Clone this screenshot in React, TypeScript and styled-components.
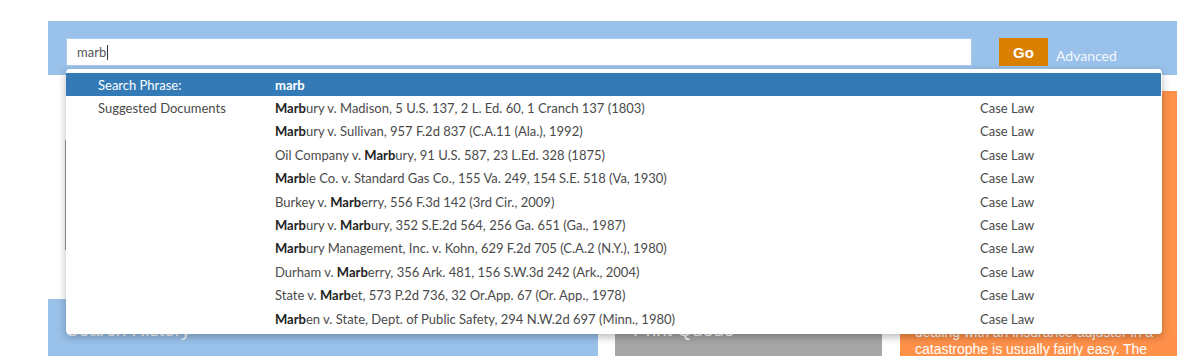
import React from 'react'
import styled, { createGlobalStyle } from 'styled-components'

type Suggestion = {
  parts: { text: string; bold?: boolean }[]
  kind: string
}

const suggestions: Suggestion[] = [
  { parts: [{ text: 'Marb', bold: true }, { text: 'ury v. Madison, 5 U.S. 137, 2 L. Ed. 60, 1 Cranch 137 (1803)' }], kind: 'Case Law' },
  { parts: [{ text: 'Marb', bold: true }, { text: 'ury v. Sullivan, 957 F.2d 837 (C.A.11 (Ala.), 1992)' }], kind: 'Case Law' },
  { parts: [{ text: 'Oil Company v. ' }, { text: 'Marb', bold: true }, { text: 'ury, 91 U.S. 587, 23 L.Ed. 328 (1875)' }], kind: 'Case Law' },
  { parts: [{ text: 'Marb', bold: true }, { text: 'le Co. v. Standard Gas Co., 155 Va. 249, 154 S.E. 518 (Va, 1930)' }], kind: 'Case Law' },
  { parts: [{ text: 'Burkey v. ' }, { text: 'Marb', bold: true }, { text: 'erry, 556 F.3d 142 (3rd Cir., 2009)' }], kind: 'Case Law' },
  { parts: [{ text: 'Marb', bold: true }, { text: 'ury v. ' }, { text: 'Marb', bold: true }, { text: 'ury, 352 S.E.2d 564, 256 Ga. 651 (Ga., 1987)' }], kind: 'Case Law' },
  { parts: [{ text: 'Marb', bold: true }, { text: 'ury Management, Inc. v. Kohn, 629 F.2d 705 (C.A.2 (N.Y.), 1980)' }], kind: 'Case Law' },
  { parts: [{ text: 'Durham v. ' }, { text: 'Marb', bold: true }, { text: 'erry, 356 Ark. 481, 156 S.W.3d 242 (Ark., 2004)' }], kind: 'Case Law' },
  { parts: [{ text: 'State v. ' }, { text: 'Marb', bold: true }, { text: 'et, 573 P.2d 736, 32 Or.App. 67 (Or. App., 1978)' }], kind: 'Case Law' },
  { parts: [{ text: 'Marb', bold: true }, { text: 'en v. State, Dept. of Public Safety, 294 N.W.2d 697 (Minn., 1980)' }], kind: 'Case Law' },
]

const GlobalStyle = createGlobalStyle`
  body {
    margin: 0;
    background: #fff;
    font-family: Lato, 'Open Sans', sans-serif;
    overflow: hidden;
  }
`

const Page = styled.div`
  width: 1129px;
  margin-left: 48px;
  padding-top: 21px;
  height: 335px;
  overflow: hidden;
`

const Header = styled.div`
  position: relative;
  height: 54px;
  box-sizing: border-box;
  padding: 17px 0 0 18px;
  background: #99c1ea;
  display: flex;
  align-items: flex-start;
`

const SearchInput = styled.div`
  width: 906px;
  height: 28px;
  box-sizing: border-box;
  background: #fff;
  border: 1px solid #a9cdf0;
  padding-left: 10px;
  display: flex;
  align-items: center;
  font-size: 13px;
  color: #555;
`

const Caret = styled.span`
  display: inline-block;
  width: 1px;
  height: 15px;
  background: #333;
  margin-left: 1px;
`

const GoButton = styled.button`
  margin-left: 27px;
  width: 49px;
  height: 28px;
  border: none;
  background: #d98000;
  color: #fff;
  font-family: 'Liberation Sans', Arial, sans-serif;
  font-weight: bold;
  font-size: 15px;
  padding: 0;
`

const AdvancedLink = styled.span`
  margin: 9px 0 0 8px;
  font-size: 14px;
  color: #f4f8fd;
`

const Dropdown = styled.div`
  position: absolute;
  left: 18px;
  top: 48px;
  width: 1096px;
  box-sizing: border-box;
  padding: 4px 1px 4px 0;
  background: #fff;
  border-radius: 4px;
  box-shadow: 0 3px 9px rgba(0, 0, 0, 0.28);
  z-index: 10;
`

const Row = styled.div<{ $active?: boolean }>`
  display: grid;
  grid-template-columns: 32px 177px 705px 1fr;
  align-items: center;
  height: 23.4px;
  font-size: 13px;
  color: ${(p) => (p.$active ? '#fff' : '#4a4a4a')};
  background: ${(p) => (p.$active ? '#337ab7' : 'transparent')};
  white-space: nowrap;
`

const Cell = styled.span``

const Strong = styled.b<{ $light?: boolean }>`
  font-weight: bold;
  color: ${(p) => (p.$light ? '#fff' : '#222')};
`

const Body = styled.div`
  display: grid;
  grid-template-columns: 834px 277px;
  column-gap: 18px;
  padding-top: 16px;
`

const LeftColumn = styled.div`
  display: flex;
  flex-direction: column;
`

const Slide = styled.div`
  height: 208px;
  padding: 49px 0 0 17px;
  box-sizing: border-box;
`

const SlideImage = styled.div`
  width: 300px;
  height: 110px;
  background: #9a9a9a;
`

const CardRow = styled.div`
  display: flex;
  gap: 17px;
`

const Card = styled.div<{ $bg: string; $w: number }>`
  width: ${(p) => p.$w}px;
  height: 80px;
  background: ${(p) => p.$bg};
  color: #fff;
  padding: 20px 18px;
  box-sizing: border-box;
  font-family: 'Liberation Sans', Arial, sans-serif;
  font-size: 19px;
`

const PromoCard = styled.div`
  background: #ff914a;
  height: 300px;
  padding: 233px 16px 0 15px;
  box-sizing: border-box;
  color: #fff;
  font-family: 'Liberation Sans', Arial, sans-serif;
  font-size: 14px;
  line-height: 17px;
`

export default function App() {
  return (
    <>
      <GlobalStyle />
      <Page>
        <Header>
          <SearchInput>
            marb
            <Caret />
          </SearchInput>
          <GoButton>Go</GoButton>
          <AdvancedLink>Advanced</AdvancedLink>
          <Dropdown>
            <Row $active>
              <span />
              <Cell>Search Phrase:</Cell>
              <Cell>
                <Strong $light>marb</Strong>
              </Cell>
              <span />
            </Row>
            {suggestions.map((s, i) => (
              <Row key={i}>
                <span />
                <Cell>{i === 0 ? 'Suggested Documents' : ''}</Cell>
                <Cell>
                  {s.parts.map((p, j) =>
                    p.bold ? <Strong key={j}>{p.text}</Strong> : <React.Fragment key={j}>{p.text}</React.Fragment>,
                  )}
                </Cell>
                <Cell>{s.kind}</Cell>
              </Row>
            ))}
          </Dropdown>
        </Header>
        <Body>
          <LeftColumn>
            <Slide>
              <SlideImage />
            </Slide>
            <CardRow>
              <Card $bg="#99c1ea" $w={550}>Search History</Card>
              <Card $bg="#a6a6a6" $w={267}>Print Queue</Card>
            </CardRow>
          </LeftColumn>
          <PromoCard>
            dealing with an insurance adjuster in a catastrophe is usually fairly easy. The
          </PromoCard>
        </Body>
      </Page>
    </>
  )
}
